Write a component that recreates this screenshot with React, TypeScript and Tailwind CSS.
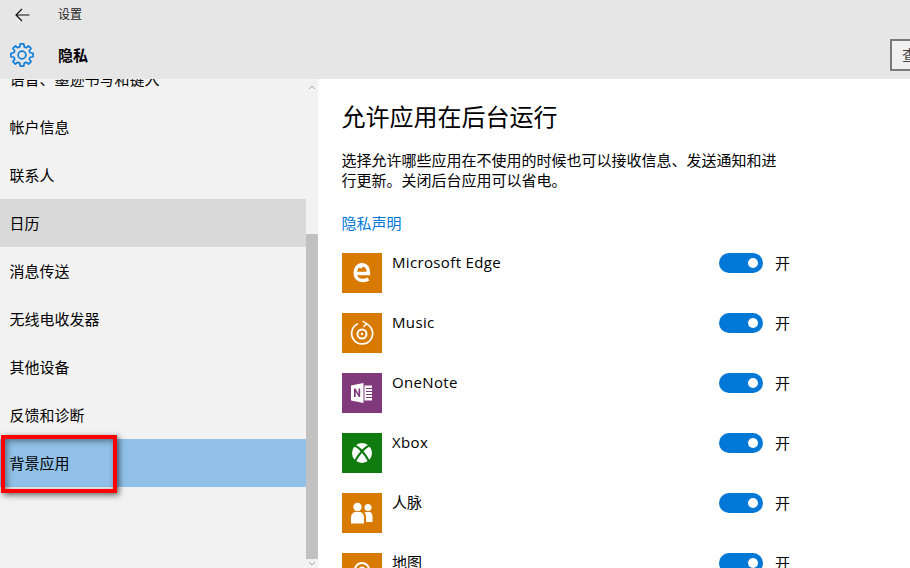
import React from "react";

const FONT = '"Open Sans","Noto Sans CJK SC",sans-serif';

function gearPath(cx: number, cy: number, ro: number, ri: number) {
  const pts: string[] = [];
  for (let i = 0; i < 8; i++) {
    const a = (i * 45 - 90) * (Math.PI / 180);
    const d = [
      [ri, -15.5],
      [ro, -9],
      [ro, 9],
      [ri, 15.5],
    ];
    for (const [r, o] of d) {
      const t = a + (o * Math.PI) / 180;
      pts.push(`${(cx + r * Math.cos(t)).toFixed(2)} ${(cy + r * Math.sin(t)).toFixed(2)}`);
    }
  }
  return "M" + pts.join("L") + "Z";
}

const EdgeIcon = () => (
  <svg width="40" height="40" viewBox="0 0 40 40">
    <path d="M13.500 20.500H26.500C26.800 15 24 11.700 20 11.700C16 11.700 13.200 15.500 13.200 20C13.200 25 16.300 27.500 20.700 27.500C23 27.500 25 27 26.500 26" fill="none" stroke="#fff" strokeWidth="3.400" />
    <path d="M12 17C13.500 13.500 16.500 15 20 15.500L21 12.500L14 13.500z" fill="#fff" />
  </svg>
);
const MusicIcon = () => (
  <svg width="40" height="40" viewBox="0 0 40 40" fill="none" stroke="#fff">
    <path d="M24 10.700a10.500 10.500 0 1 1-8 .1" strokeWidth="1.700" />
    <path d="M20.500 8l4 2.700-3 3.300" strokeWidth="1.500" />
    <circle cx="20" cy="21" r="4.500" strokeWidth="2" />
    <circle cx="20" cy="21" r="1.200" fill="#fff" stroke="none" />
  </svg>
);
const OneNoteIcon = () => (
  <svg width="40" height="40" viewBox="0 0 40 40">
    <path d="M9 12.500l12.500-2.500v20L9 27.500z" fill="#fff" />
    <path d="M22.500 12.500h7.500v15h-7.500z" fill="#fff" />
    <path d="M24 15.500h6.500M24 18.500h6.500M24 21.500h6.500M24 24.500h6.500" stroke="#80397b" strokeWidth="1" />
    <path d="M12 24v-8.500h1.500l3 5.300v-5.300h1.700v8.500h-1.500l-3-5.200V24z" fill="#80397b" />
  </svg>
);
const XboxIcon = () => (
  <svg width="40" height="40" viewBox="0 0 40 40">
    <circle cx="20" cy="20" r="10" fill="#fff" />
    <path d="M12.500 12.500C15.500 13 18 15 20 17C22 15 24.500 13 27.500 12.500L28 11L24 15L20 19.500L16 15L12 11z" fill="#107c10" />
    <path d="M11.500 12C16 13.500 22.500 20 27.500 29" fill="none" stroke="#107c10" strokeWidth="2.200" />
    <path d="M28.500 12C24 13.500 17.500 20 12.500 29" fill="none" stroke="#107c10" strokeWidth="2.200" />
  </svg>
);
const PeopleIcon = () => (
  <svg width="40" height="40" viewBox="0 0 40 40" fill="#fff">
    <circle cx="15.500" cy="14" r="4.200" />
    <circle cx="26" cy="14.500" r="3.500" />
    <path d="M9 30.500v-6c0-3.500 2.300-5.500 5-5.500h3c3 0 5 2 5 5.500v6z" />
    <path d="M24 29v-5.500c0-1.700-.7-3.300-1.700-4.300.7-.2 1.400-.2 2-.2h2.700c2.500 0 3.500 2 3.500 4.500V29z" />
  </svg>
);
const MapIcon = () => (
  <svg width="40" height="40" viewBox="0 0 40 40" fill="none" stroke="#fff" strokeWidth="2">
    <circle cx="20" cy="17" r="7" />
    <circle cx="20" cy="17" r="2.500" />
  </svg>
);

const Toggle = () => (
  <div className="flex items-center gap-3 h-5">
    <div className="w-11 h-5 rounded-full bg-[#0078d7] flex items-center justify-end pr-[5px]">
      <div className="w-2.5 h-2.5 rounded-full bg-white" />
    </div>
    <span className="text-[15px] leading-5 text-black">开</span>
  </div>
);

const apps: { name: string; bg: string; latin: boolean; icon: React.ReactNode }[] = [
  { name: "Microsoft Edge", bg: "bg-[#d97a00]", latin: true, icon: <EdgeIcon /> },
  { name: "Music", bg: "bg-[#d97a00]", latin: true, icon: <MusicIcon /> },
  { name: "OneNote", bg: "bg-[#80397b]", latin: true, icon: <OneNoteIcon /> },
  { name: "Xbox", bg: "bg-[#107c10]", latin: true, icon: <XboxIcon /> },
  { name: "人脉", bg: "bg-[#d97a00]", latin: false, icon: <PeopleIcon /> },
  { name: "地图", bg: "bg-[#d97a00]", latin: false, icon: <MapIcon /> },
];

const navItems = ["语音、墨迹书写和键入", "帐户信息", "联系人", "日历", "消息传送", "无线电收发器", "其他设备", "反馈和诊断", "背景应用"];

export default function App() {
  return (
    <div className="relative w-[910px] h-[568px] overflow-hidden bg-white flex flex-col" style={{ fontFamily: FONT }}>
      <header className="h-[79px] shrink-0 bg-[#e6e6e6] relative z-10 overflow-hidden">
        <div className="flex items-center h-[29px] pl-[15px]">
          <svg width="15" height="14" viewBox="0 0 15 14" fill="none" stroke="#111" strokeWidth="1.200">
            <path d="M14.500 7H1M7 1L1 7l6 6" />
          </svg>
          <span className="ml-[28px] text-xs text-[#222]">设置</span>
        </div>
        <div className="flex items-center h-[52px] pl-[10px] relative">
          <svg width="24" height="24" viewBox="0 0 24 24" fill="none" stroke="#0f7fdc" strokeWidth="1.700" strokeLinejoin="round">
            <path d={gearPath(12, 12, 11.2, 8.400)} />
            <circle cx="12" cy="12" r="3.900" />
          </svg>
          <span className="ml-[24px] text-[15px] font-bold text-black">隐私</span>
          <div className="absolute left-[890px] top-[10px] w-[40px] h-[32px] border-2 border-[#7a7a7a] bg-[#f0f0f0] pl-[10px] text-[15px] leading-[28px] text-[#444]">查</div>
        </div>
      </header>
      <div className="flex flex-1 min-h-0">
        <aside className="w-[318px] shrink-0 bg-[#f2f2f2] flex overflow-hidden">
          <nav className="w-[306px] shrink-0 -mt-[24px]">
            {navItems.map((t, i) => (
              <div
                key={t}
                className={`h-12 flex items-center pl-[9.5px] text-[15px] text-black ${i === 3 ? "bg-[#d9d9d9]" : ""} ${i === 8 ? "bg-[#91c1e8]" : ""}`}
              >
                {t}
              </div>
            ))}
          </nav>
          <div className="w-3 shrink-0 flex flex-col">
            <div className="h-[155px] flex justify-center pt-[6px]">
              <svg width="8" height="5" viewBox="0 0 8 5" fill="none" stroke="#a8a8a8"><path d="M1 4l3-3 3 3" /></svg>
            </div>
            <div className="h-[325px] bg-[#c1c1c1]" />
            <div className="flex-1 flex justify-center items-center">
              <svg width="8" height="5" viewBox="0 0 8 5" fill="none" stroke="#a8a8a8"><path d="M1 1l3 3 3-3" /></svg>
            </div>
          </div>
        </aside>
        <main className="flex-1 pl-[24px] overflow-hidden">
          <h1 className="-ml-[0.5px] mt-[22px] text-2xl leading-8 text-black">允许应用在后台运行</h1>
          <p className="-ml-[0.5px] mt-[17px] w-[440px] text-[15px] leading-5 text-black">选择允许哪些应用在不使用的时候也可以接收信息、发送通知和进行更新。关闭后台应用可以省电。</p>
          <div className="-ml-[0.5px] mt-[23px] text-[15px] leading-5 text-[#0078d7]">隐私声明</div>
          <div className="mt-[20px] flex flex-col">
            {apps.map((a) => (
              <div key={a.name} className="h-[60px] shrink-0 flex items-start">
                <div className={`w-10 h-10 ${a.bg}`}>{a.icon}</div>
                <div className={`ml-[10px] -mt-px w-[327px] text-[15px] leading-5 text-black ${a.latin ? "tracking-[0.35px]" : ""}`}>{a.name}</div>
                <Toggle />
              </div>
            ))}
          </div>
        </main>
      </div>
      <div className="absolute left-[1px] top-[435px] w-[116px] h-[58px] border-[4px] border-[#ff0000] shadow-[2px_2px_6px_rgba(0,0,0,0.6),inset_2px_2px_6px_rgba(0,0,0,0.45)]" />
    </div>
  );
}
